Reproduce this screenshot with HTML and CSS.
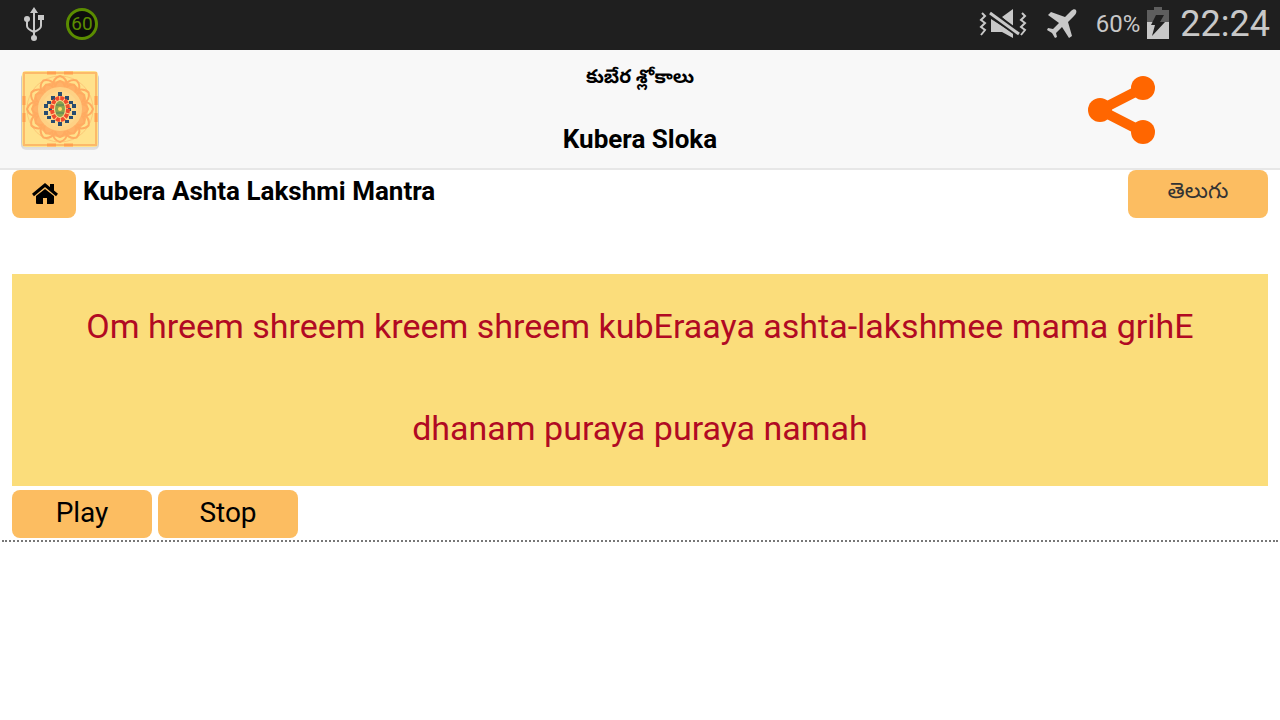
FILE: index.html
```html
<!DOCTYPE html>
<html lang="en">
<head>
    <meta charset="UTF-8">
    <meta name="viewport" content="width=device-width, initial-scale=1.0">
    <title>Kubera Sloka</title>
    <link rel="stylesheet" href="styles.css">
</head>
<body>
    <div class="status-bar">
        <div class="status-left">
            <svg width="22" height="36" viewBox="0 0 22 36" fill="none" stroke="#c8c8c8" stroke-width="2">
                <path d="M11 5v25M4 13v7q0 3 7 6M18 11v9q0 3-7 6"/>
                <path d="M11 1l4 6H7zM15 9h6v5h-6z" fill="#c8c8c8" stroke="none"/>
                <circle cx="4" cy="13" r="3" fill="#c8c8c8" stroke="none"/>
                <circle cx="11" cy="32" r="3" fill="#c8c8c8" stroke="none"/>
            </svg>
            <span class="badge">60</span>
        </div>
        <div class="status-right">
            <svg width="48" height="32" viewBox="0 0 48 32" fill="#c8c8c8">
                <path d="M3 5l3 3-4 4 4 3-4 4 4 3-4 5M43 5l3 3-4 4 4 3-4 4 4 3-4 5" fill="none" stroke="#c8c8c8" stroke-width="2"/>
                <path d="M23 9L34 1v18zM12 11l22 14v5l-11-6H12z"/>
                <path d="M11 5l29 21" stroke="#1f1f1f" stroke-width="7"/>
                <path d="M11 5l29 21" stroke="#c8c8c8" stroke-width="3"/>
            </svg>
            <svg class="plane" width="30" height="30" viewBox="0 0 30 30" fill="#c8c8c8">
                <path d="M29 1c1 2 0 4-2 6l-6 6 4 14-3 2-7-11-6 6 1 4-2 1-3-5-5-3 1-2 5 1 6-6L1 6l3-3 14 5 6-6c2-2 4-2 5-1z"/>
            </svg>
            <span class="percent">60%</span>
            <svg width="22" height="34" viewBox="0 0 22 34">
                <path d="M7 0h8v3h7v13H0V3h7z" fill="#5e5e5e"/>
                <path d="M0 15h22v17H0z" fill="#c8c8c8"/>
                <path d="M9 8h8l-4 7h5L5 29l3-11H4z" fill="#1f1f1f"/>
            </svg>
            <span class="clock">22:24</span>
        </div>
    </div>

    <header class="header">
        <svg class="logo" width="80" height="82" viewBox="0 0 80 82" fill="none">
            <defs>
                <linearGradient id="shade" x1="0" y1="0" x2="0" y2="1">
                    <stop offset="0.9" stop-color="#ccc"/>
                    <stop offset="1" stop-color="#e4e4e4"/>
                </linearGradient>
                <g id="petal">
                    <path d="M32 18q1-9 8-11 7 2 8 11M35 18q1-5 5-6 4 1 5 6"/>
                </g>
            </defs>
            <rect x="1" y="4" width="78" height="77" rx="5" fill="url(#shade)"/>
            <rect x="2" y="2" width="76" height="76" rx="4" fill="#ffe28c"/>
            <path d="M4 4h72v72H4z" stroke="#fcba69" stroke-width="2"/>
            <path d="M27 4h9m8 0h9M27 76h9m8 0h9M4 27v9m0 8v9M76 27v9m0 8v9" stroke="#ffa052" stroke-width="3"/>
            <circle cx="40" cy="40" r="33" stroke="#fdc878"/>
            <circle cx="40" cy="40" r="25" fill="#fed184" stroke="#ffb268" stroke-width="6"/>
            <g stroke="#ffab61" stroke-width="2">
                <use href="#petal"/>
                <use href="#petal" transform="rotate(30 40 40)"/>
                <use href="#petal" transform="rotate(60 40 40)"/>
                <use href="#petal" transform="rotate(90 40 40)"/>
                <use href="#petal" transform="rotate(120 40 40)"/>
                <use href="#petal" transform="rotate(150 40 40)"/>
                <use href="#petal" transform="rotate(180 40 40)"/>
                <use href="#petal" transform="rotate(210 40 40)"/>
                <use href="#petal" transform="rotate(240 40 40)"/>
                <use href="#petal" transform="rotate(270 40 40)"/>
                <use href="#petal" transform="rotate(300 40 40)"/>
                <use href="#petal" transform="rotate(330 40 40)"/>
            </g>
            <circle cx="40" cy="40" r="18" fill="#fdd78b"/>
            <path d="M38 23h4v4h-4zM31 27h4v4h-4zM45 27h4v4h-4zM27 32h4v3h-4zM49 32h4v3h-4zM24 35h4v4h-4zM52 35h4v4h-4zM24 42h4v4h-4zM52 42h4v4h-4zM27 47h4v3h-4zM49 47h4v3h-4zM31 51h4v3h-4zM45 51h4v3h-4zM38 53h4v4h-4z" fill="#294c70"/>
            <path d="M29 39h3v3h-3zM48 39h3v3h-3z" fill="#294c70"/>
            <ellipse cx="40" cy="40" rx="8" ry="11" stroke="#f04b2d" stroke-width="4" stroke-dasharray="4 1"/>
            <ellipse cx="40" cy="40" rx="5" ry="8" fill="#8aa34d"/>
            <path d="M36 36h8M36 44h8" stroke="#527c60"/>
            <circle cx="40" cy="40" r="2" fill="#fddb64"/>
        </svg>
        <div class="titles">
            <h1 class="title-telugu" lang="te">కుబేర శ్లోకాలు</h1>
            <h1 class="title">Kubera Sloka</h1>
        </div>
        <a class="share" href="#" aria-label="Share">
            <svg width="68" height="68" viewBox="0 0 68 68" fill="#ff6600">
                <path d="M55 12L12 34l43 22" fill="none" stroke="#ff6600" stroke-width="10"/>
                <circle cx="12" cy="34" r="12"/>
                <circle cx="55" cy="12" r="12"/>
                <circle cx="55" cy="56" r="12"/>
            </svg>
        </a>
    </header>

    <main class="content">
        <div class="toolbar">
            <a class="btn home" href="#" aria-label="Home">
                <svg width="26" height="22" viewBox="0 0 26 22">
                    <path d="M1 12L13 2l12 10" fill="none" stroke="#000" stroke-width="3"/>
                    <path d="M18 1h4v9l-4-4zM13 6l9 7v7q0 1-1 1h-6v-6h-4v6H5q-1 0-1-1v-7z"/>
                </svg>
            </a>
            <h2 class="name">Kubera Ashta Lakshmi Mantra</h2>
            <button class="btn language" type="button" lang="te">తెలుగు</button>
        </div>

        <p class="mantra">Om hreem shreem kreem shreem kubEraaya ashta-lakshmee mama grihE<br>dhanam puraya puraya namah</p>

        <div class="controls">
            <button class="btn" type="button">Play</button>
            <button class="btn" type="button">Stop</button>
        </div>
    </main>
    <hr class="divider">
</body>
</html>
```
FILE: styles.css
```css
* {
    margin: 0;
    padding: 0;
    box-sizing: border-box;
}

body {
    font-family: Roboto, "Noto Sans Telugu", "Noto Sans", sans-serif;
    background: #fff;
    color: #000;
}

svg {
    display: block;
}

.status-bar {
    display: flex;
    align-items: center;
    justify-content: space-between;
    height: 50px;
    padding: 0 10px 2px 23px;
    background: #1f1f1f;
    color: #c8c8c8;
}

.status-left,
.status-right {
    display: flex;
    align-items: center;
}

.status-left {
    gap: 21px;
}

.badge {
    width: 32px;
    height: 32px;
    border: 3px solid #5b8c00;
    border-radius: 50%;
    background: #0d0d0d;
    color: #5b8c00;
    font-size: 19px;
    line-height: 26px;
    text-align: center;
}

.plane {
    margin: 0 19px 0 20px;
}

.percent {
    margin-right: 7px;
    font-size: 24px;
}

.clock {
    margin-left: 11px;
    font-size: 36px;
    line-height: 48px;
}

.header {
    display: grid;
    grid-template-columns: 1fr auto 1fr;
    align-items: center;
    height: 120px;
    padding: 2px 20px 0;
    background: #f8f8f8;
    border-bottom: 2px solid #e7e7e7;
}

.titles {
    text-align: center;
}

.title-telugu {
    font-size: 19px;
    line-height: 24px;
    margin-bottom: 34px;
}

.title {
    font-size: 26px;
    line-height: 32px;
}

.share {
    justify-self: end;
    margin-right: 104px;
}

.content {
    padding: 0 12px;
}

.toolbar {
    display: flex;
    align-items: flex-start;
}

.btn {
    display: block;
    width: 140px;
    height: 48px;
    padding-bottom: 2px;
    border: none;
    border-radius: 8px;
    background: #fcbd61;
    color: #000;
    font-family: inherit;
    font-size: 28px;
    line-height: 44px;
    cursor: pointer;
}

.home {
    display: flex;
    align-items: center;
    justify-content: center;
    width: 64px;
    padding: 0 0 0 2px;
}

.name {
    margin-left: 7px;
    font-size: 26px;
    line-height: 42px;
}

.language {
    margin-left: auto;
    padding-bottom: 6px;
    color: #333;
    font-size: 22px;
    line-height: 40px;
}

.mantra {
    margin-top: 56px;
    padding: 1px 56px 7px;
    background: #fbdd7b;
    color: #b10a23;
    font-size: 34px;
    line-height: 102px;
    text-align: center;
}

.controls {
    display: flex;
    gap: 6px;
    margin-top: 4px;
}

.divider {
    margin: 2px;
    border: none;
    border-top: 2px dotted #777;
}
```
